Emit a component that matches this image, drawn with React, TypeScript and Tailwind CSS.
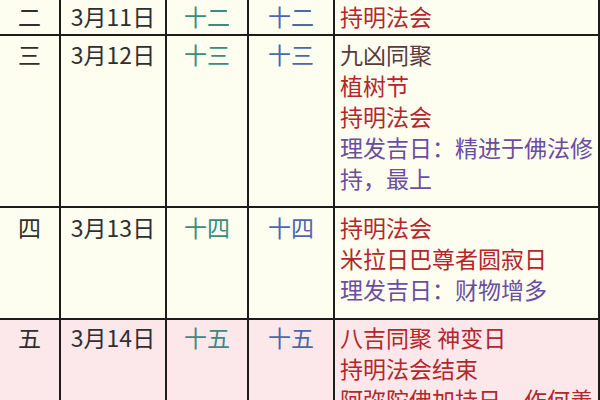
import React from "react";

type Line = { text: string; color: string };

interface Row {
  num: string;
  date: string;
  lunarA: string;
  lunarB: string;
  lines: Line[];
  height: string;
  pad: string;
  bg: string;
}

const RED = "text-[#b3262c]";
const PURPLE = "text-[#6a4d9e]";
const BROWN = "text-[#5a3a3c]";

const rows: Row[] = [
  {
    num: "二",
    date: "3月11日",
    lunarA: "十二",
    lunarB: "十二",
    lines: [{ text: "持明法会", color: RED }],
    height: "h-[36px]",
    pad: "pt-[1px]",
    bg: "bg-[#fefef0]",
  },
  {
    num: "三",
    date: "3月12日",
    lunarA: "十三",
    lunarB: "十三",
    lines: [
      { text: "九凶同聚", color: BROWN },
      { text: "植树节", color: RED },
      { text: "持明法会", color: RED },
      { text: "理发吉日：精进于佛法修持，最上", color: PURPLE },
    ],
    height: "h-[172px]",
    pad: "pt-[3px]",
    bg: "bg-[#fefef0]",
  },
  {
    num: "四",
    date: "3月13日",
    lunarA: "十四",
    lunarB: "十四",
    lines: [
      { text: "持明法会", color: RED },
      { text: "米拉日巴尊者圆寂日", color: RED },
      { text: "理发吉日：财物增多", color: PURPLE },
    ],
    height: "h-[112px]",
    pad: "pt-[4px]",
    bg: "bg-[#fefef0]",
  },
  {
    num: "五",
    date: "3月14日",
    lunarA: "十五",
    lunarB: "十五",
    lines: [
      { text: "八吉同聚 神变日", color: RED },
      { text: "持明法会结束", color: RED },
      { text: "阿弥陀佛加持日，作何善事功德增长千万倍", color: RED },
    ],
    height: "flex-1",
    pad: "pt-[2px]",
    bg: "bg-[#fce8ea]",
  },
];

export default function App() {
  return (
    <div
      className="w-[600px] h-[400px] overflow-hidden flex flex-col bg-[#fefef0] text-[23px] leading-[31px]"
      style={{ fontFamily: '"Noto Sans CJK SC", "Noto Sans", sans-serif' }}
    >
      {rows.map((r, i) => (
        <div
          key={i}
          className={`grid grid-cols-[61px_106px_82px_86px_265px] shrink-0 border-b-2 border-[#1c1c1c] ${r.height} ${r.bg}`}
        >
          <div className={`border-r-2 border-[#1c1c1c] text-center text-[#2f2f2f] ${r.pad}`}>{r.num}</div>
          <div className={`border-r-2 border-[#1c1c1c] text-center text-[#2f2f2f] ${r.pad}`}>{r.date}</div>
          <div className={`border-r-2 border-[#1c1c1c] text-center text-[#3a8c7e] ${r.pad}`}>{r.lunarA}</div>
          <div className={`border-r-2 border-[#1c1c1c] text-center text-[#4a68ad] ${r.pad}`}>{r.lunarB}</div>
          <div className={`border-r-2 border-[#1c1c1c] pl-[5px] ${r.pad}`}>
            {r.lines.map((l, j) => (
              <div key={j} className={l.color}>
                {l.text}
              </div>
            ))}
          </div>
        </div>
      ))}
    </div>
  );
}
